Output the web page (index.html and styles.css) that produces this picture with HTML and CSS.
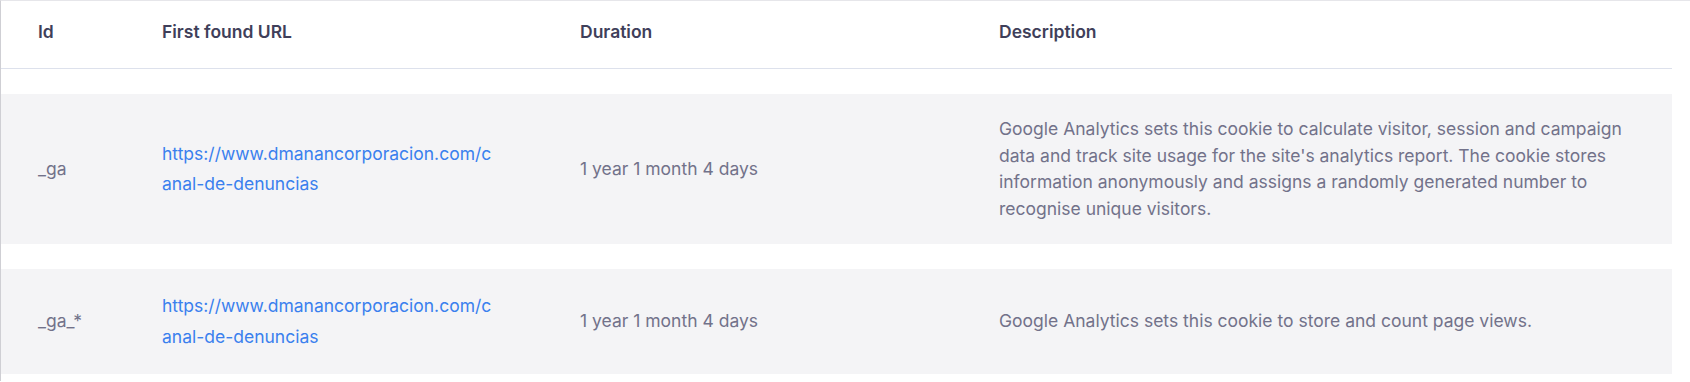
FILE: index.html
```html
<!DOCTYPE html>
<html lang="en">
<head>
<meta charset="utf-8">
<title>Cookie table</title>
<link rel="stylesheet" href="styles.css">
</head>
<body>
<div class="frame">
  <div class="cookie-table">
    <div class="row head">
      <div class="cell">Id</div>
      <div class="cell">First found URL</div>
      <div class="cell">Duration</div>
      <div class="cell">Description</div>
    </div>
    <div class="row body">
      <div class="cell">_ga</div>
      <div class="cell url"><a href="#">https://www.dmanancorporacion.com/canal-de-denuncias</a></div>
      <div class="cell">1 year 1 month 4 days</div>
      <div class="cell desc">Google Analytics sets this cookie to calculate visitor, session and campaign data and track site usage for the site's analytics report. The cookie stores information anonymously and assigns a randomly generated number to recognise unique visitors.</div>
    </div>
    <div class="row body">
      <div class="cell">_ga_*</div>
      <div class="cell url"><a href="#">https://www.dmanancorporacion.com/canal-de-denuncias</a></div>
      <div class="cell">1 year 1 month 4 days</div>
      <div class="cell desc">Google Analytics sets this cookie to store and count page views.</div>
    </div>
  </div>
</div>
</body>
</html>
```
FILE: styles.css
```css
html, body {
  margin: 0;
  padding: 0;
  background: #ffffff;
}

body {
  font-family: Inter, "Noto Sans", sans-serif;
  font-size: 17.5px;
  line-height: 26.5px;
  color: #72728a;
}

.frame {
  border-top: 1px solid #e6e6ea;
  border-left: 1px solid #cfcfd4;
  height: 381px;
  padding-right: 18px;
  box-sizing: border-box;
}

.cookie-table {
  display: flex;
  flex-direction: column;
  gap: 25px;
}

.row {
  display: grid;
  grid-template-columns: 124px 418px 419px 1fr;
  align-items: center;
}

.cell {
  padding: 0 37px;
}

.head {
  height: 68px;
  box-sizing: border-box;
  border-bottom: 1px solid #dde1ec;
  padding-bottom: 5px;
  font-weight: 600;
  color: #3f3f5a;
}

.body {
  background: #f4f4f6;
  padding: 22px 0;
}

.url {
  padding-right: 46px;
  line-height: 30.5px;
  word-break: break-all;
}

.url a {
  color: #3a80ee;
  text-decoration: none;
}
```
